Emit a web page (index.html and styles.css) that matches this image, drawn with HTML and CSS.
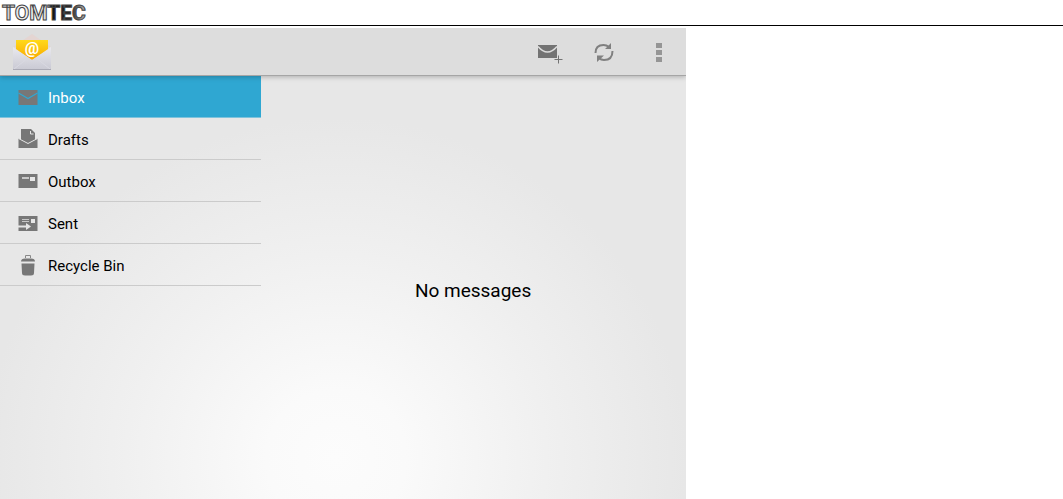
FILE: index.html
```
<!DOCTYPE html>
<html lang="en">
<head>
	<meta charset="utf-8">
	<title>Email</title>
	<link rel="stylesheet" href="styles.css">
</head>
<body>
	<header class="page-header">
		<svg class="brand" width="90" height="25" viewBox="0 0 90 25" role="img" aria-label="TOMTEC">
			<defs>
				<linearGradient id="brandFill" gradientUnits="userSpaceOnUse" x1="0" x2="88" y1="0" y2="0">
					<stop offset="0" stop-color="#bbb"/>
					<stop offset="0.25" stop-color="#f4f4f4"/>
					<stop offset="0.54" stop-color="#ddd"/>
					<stop offset="0.58" stop-color="#111"/>
					<stop offset="0.8" stop-color="#222"/>
					<stop offset="1" stop-color="#ccc"/>
				</linearGradient>
			</defs>
			<text class="brand-text" x="2" y="20" fill="url(#brandFill)">TOMTEC</text>
		</svg>
	</header>
	<div class="app">
		<div class="action-bar">
			<svg class="app-icon" width="40" height="40" viewBox="0 0 40 40" aria-hidden="true">
				<defs>
					<linearGradient id="env" x1="0" x2="0" y1="0" y2="1">
						<stop offset="0" stop-color="#e9e9ee"/>
						<stop offset="1" stop-color="#c9c9d3"/>
					</linearGradient>
					<linearGradient id="paper" x1="0" x2="0" y1="0" y2="1">
						<stop offset="0" stop-color="#ffd91a"/>
						<stop offset="1" stop-color="#f9a800"/>
					</linearGradient>
				</defs>
				<path d="M1 15L20 2l19 13z" fill="#e4d5d2"/>
				<path d="M4 8h32v10L20 28 4 18z" fill="url(#paper)"/>
				<path d="M1 15l19 13 19-13v23H1z" fill="url(#env)"/>
				<path d="M2 37l14-11M38 37L24 26" stroke="#d9d9e2" fill="none"/>
				<path d="M1 37.500h38" stroke="#a9a9b4"/>
				<text class="at" x="20" y="22">@</text>
			</svg>
			<div class="actions">
				<button type="button" class="action" aria-label="Compose">
					<svg width="26" height="24" viewBox="0 0 26 24">
						<path d="M1 5h19v13H1z" fill="#737373"/>
						<path d="M1 6.500q9.500 11 19 0" fill="none" stroke="#ddd" stroke-width="1.500"/>
						<path d="M21.500 15v9M17 19.500h9" stroke="#ddd" stroke-width="3"/>
						<path d="M21.500 15.500v8M17.500 19.500h8" stroke="#737373"/>
					</svg>
				</button>
				<button type="button" class="action" aria-label="Refresh">
					<svg width="26" height="24" viewBox="0 0 26 24">
						<path d="M4.500 13q0-8 8-8 3 0 5.500 2M21.500 11q0 9-8.500 9-3 0-5-2" fill="none" stroke="#808080" stroke-width="2"/>
						<path d="M20 3v6h-6zM6 22v-6.500h7z" fill="#808080"/>
					</svg>
				</button>
				<button type="button" class="action" aria-label="More options">
					<svg width="26" height="24" viewBox="0 0 26 24">
						<path d="M11 3h6v5h-6zM11 10h6v5h-6zM11 17h6v5h-6z" fill="#959595"/>
					</svg>
				</button>
			</div>
		</div>
		<div class="content">
			<nav class="folders">
				<a class="folder selected" href="#inbox">
					<svg class="folder-icon" width="20" height="22" viewBox="0 0 20 22">
						<path d="M0.500 3h19v15H0.500z" fill="#777"/>
						<path d="M0.500 6l9.500 5.500L19.500 6" fill="none" stroke="#2fa7d2" stroke-width="1.200"/>
					</svg>
					Inbox
				</a>
				<a class="folder" href="#drafts">
					<svg class="folder-icon" width="20" height="22" viewBox="0 0 20 22">
						<path d="M3 0h10l4 4v8l-7 3-7-3z" fill="#777"/>
						<path d="M12.500 2v3h3" fill="none" stroke="#e6e6e6"/>
						<path d="M0.500 9.500l9.500 5 9.500-5V19H0.500z" fill="#777"/>
						<path d="M0.500 9.500l9.500 5 9.500-5" fill="none" stroke="#e6e6e6"/>
					</svg>
					Drafts
				</a>
				<a class="folder" href="#outbox">
					<svg class="folder-icon" width="20" height="22" viewBox="0 0 20 22">
						<path d="M0.500 3h19v14H0.500z" fill="#777"/>
						<path d="M4 7h7" stroke="#c8c8c8" stroke-width="2"/>
						<path d="M12 6h5v4h-5z" fill="#e6e6e6"/>
					</svg>
					Outbox
				</a>
				<a class="folder" href="#sent">
					<svg class="folder-icon" width="20" height="22" viewBox="0 0 20 22">
						<path d="M0.500 3h19v15H0.500z" fill="#777"/>
						<path d="M4 6.500h7M4 8.500h7" stroke="#c8c8c8"/>
						<path d="M13 6h4v4h-4z" fill="#e6e6e6"/>
						<path d="M0 13.500h9" stroke="#e6e6e6" stroke-width="2"/>
						<path d="M8 10l5 3.500L8 17z" fill="#e6e6e6"/>
					</svg>
					Sent
				</a>
				<a class="folder" href="#bin">
					<svg class="folder-icon" width="20" height="22" viewBox="0 0 20 22">
						<path d="M7.500 3V0.500h5V3" fill="none" stroke="#888"/>
						<path d="M3 6.500Q3 3.500 7 3.500h6q4 0 4 3z" fill="#777"/>
						<path d="M3.500 8.500h13L16 18q0 2.500-3 2.500H7q-3 0-3-2.500z" fill="#777"/>
					</svg>
					Recycle Bin
				</a>
			</nav>
			<main class="messages">
				<p class="empty">No messages</p>
			</main>
		</div>
	</div>
</body>
</html>
```
FILE: styles.css
```
* {
	box-sizing: border-box;
}
body {
	margin: 0;
	min-height: 100vh;
	display: flex;
	flex-direction: column;
	background: #fff;
	color: #000;
	font-family: Roboto, "Liberation Sans", sans-serif;
}
.page-header {
	height: 26px;
	margin-bottom: 2px;
	border-bottom: 1px solid #000;
}
.brand {
	display: block;
}
.brand-text {
	font: bold 21px Roboto, "Liberation Sans", sans-serif;
	stroke: #444;
	stroke-width: 1px;
}
.app {
	flex: 1;
	width: 64.5%;
	display: flex;
	flex-direction: column;
	overflow: hidden;
	background: radial-gradient(ellipse 350px 340px at 49% 430px, #fcfcfc, #fafafa 20%, #f0f0f0 60%, #e7e7e7);
}
.action-bar {
	height: 48px;
	display: flex;
	align-items: center;
	justify-content: space-between;
	padding: 0 15px 0 12px;
	background: #ddd;
	border-bottom: 1px solid #a5a5a5;
	box-shadow: 0 1px 5px rgba(0, 0, 0, 0.25);
	position: relative;
}
.app-icon {
	display: block;
}
.actions {
	display: flex;
	gap: 28px;
}
.action {
	padding: 0;
	border: 0;
	background: none;
	cursor: pointer;
}
.action svg {
	display: block;
}
.at {
	font: bold 16px Roboto, sans-serif;
	fill: #fff;
	text-anchor: middle;
}
.content {
	flex: 1;
	display: flex;
}
.folders {
	width: 38%;
}
.folder {
	height: 42px;
	display: flex;
	align-items: center;
	gap: 10px;
	padding: 2px 0 0 18px;
	border-bottom: 1px solid #cbcbcb;
	color: #000;
	font-size: 15px;
	text-decoration: none;
}
.folder.selected {
	background: #2fa7d2;
	border-bottom-color: #7fc3dc;
	color: #fff;
}
.messages {
	flex: 1;
	display: flex;
	align-items: center;
	justify-content: center;
	padding-top: 6px;
}
.empty {
	margin: 0;
	font-size: 19px;
}
```
